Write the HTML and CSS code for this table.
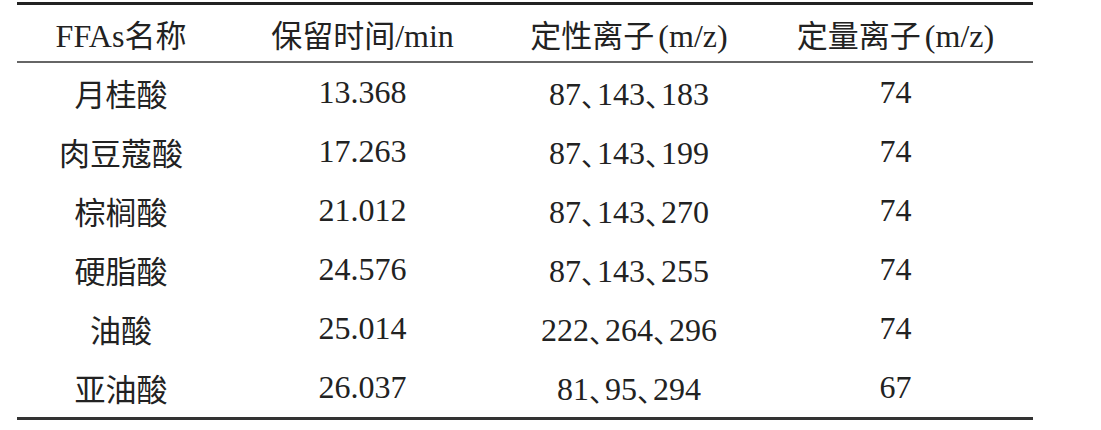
FILE: index.html
```html
<!DOCTYPE html>
<html lang="zh-CN">
<head>
    <meta charset="UTF-8">
    <meta name="viewport" content="width=device-width, initial-scale=1.0">
    <title>FFAs</title>
    <link rel="stylesheet" href="styles.css">
</head>
<body>
    <table class="ffa-table">
        <colgroup>
            <col class="c1">
            <col class="c2">
            <col class="c3">
            <col class="c4">
        </colgroup>
        <thead>
            <tr>
                <th><span class="num">FFAs</span>名称</th>
                <th>保留时间<span class="num">/min</span></th>
                <th>定性离子<span class="num paren">(m/z)</span></th>
                <th>定量离子<span class="num paren">(m/z)</span></th>
            </tr>
        </thead>
        <tbody>
            <tr><td>月桂酸</td><td class="num">13.368</td><td class="num">87<span class="sep">、</span>143<span class="sep">、</span>183</td><td class="num">74</td></tr>
            <tr><td>肉豆蔻酸</td><td class="num">17.263</td><td class="num">87<span class="sep">、</span>143<span class="sep">、</span>199</td><td class="num">74</td></tr>
            <tr><td>棕榈酸</td><td class="num">21.012</td><td class="num">87<span class="sep">、</span>143<span class="sep">、</span>270</td><td class="num">74</td></tr>
            <tr><td>硬脂酸</td><td class="num">24.576</td><td class="num">87<span class="sep">、</span>143<span class="sep">、</span>255</td><td class="num">74</td></tr>
            <tr><td>油酸</td><td class="num">25.014</td><td class="num">222<span class="sep">、</span>264<span class="sep">、</span>296</td><td class="num">74</td></tr>
            <tr><td>亚油酸</td><td class="num">26.037</td><td class="num">81<span class="sep">、</span>95<span class="sep">、</span>294</td><td class="num">67</td></tr>
        </tbody>
    </table>
</body>
</html>
```

FILE: styles.css
```css
/* 表格页面 */
body {
    margin: 0;
    padding: 2px 0 0 17px;
    background: #fff;
    font-family: "Liberation Serif", "Noto Sans CJK SC", serif;
    color: #222;
}

.ffa-table {
    width: 1016px;
    border-collapse: collapse;
    table-layout: fixed;
    border-top: 3px solid #222;
    border-bottom: 3px solid #333;
    font-size: 31px;
}

.c1 { width: 208px; }
.c2 { width: 275px; }
.c3 { width: 258px; }
.c4 { width: 275px; }

.ffa-table th {
    font-weight: normal;
    height: 56px;
    padding: 0;
    text-align: center;
    border-bottom: 2px solid #666;
}

.ffa-table td {
    height: 59px;
    padding: 0;
    text-align: center;
}

/* 数字用 Times 风格 */
.num {
    font-family: "Liberation Serif", "Times New Roman", serif;
    font-size: 32px;
}

.paren {
    margin-left: 4px;
}

/* 顿号收窄 */
.sep {
    font-family: "Noto Sans CJK SC", sans-serif;
    font-size: 28px;
    letter-spacing: -0.5em;
    margin-right: 2px;
    position: relative;
    top: 2px;
}
```
